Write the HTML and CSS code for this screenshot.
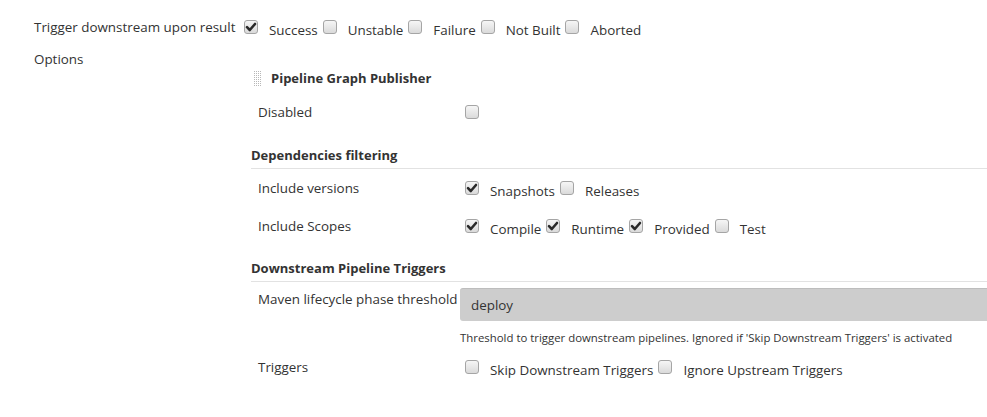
FILE: index.html
```html
<!DOCTYPE html>
<html>
<head>
<meta charset="utf-8">
<link rel="stylesheet" href="styles.css">
</head>
<body>
<div class="form">
  <div class="row top">
    <div class="label">Trigger downstream upon result</div>
    <div class="opts">
      <span class="opt"><span class="cb on"><svg viewBox="0 0 14 14"><path d="M3 7.2 L5.8 10 L11 4"/></svg></span><span class="txt">Success</span></span>
      <span class="opt"><span class="cb"></span><span class="txt">Unstable</span></span>
      <span class="opt"><span class="cb"></span><span class="txt">Failure</span></span>
      <span class="opt"><span class="cb"></span><span class="txt">Not Built</span></span>
      <span class="opt"><span class="cb"></span><span class="txt">Aborted</span></span>
    </div>
  </div>
  <div class="row options">
    <div class="label">Options</div>
    <div class="nested">
      <div class="head"><span class="handle"></span><span class="head-txt">Pipeline Graph Publisher</span></div>
      <div class="irow disabled">
        <div class="ilabel">Disabled</div>
        <div class="ictl"><span class="cb"></span></div>
      </div>
      <div class="section first">Dependencies filtering</div>
      <div class="irow">
        <div class="ilabel">Include versions</div>
        <div class="ictl">
          <span class="opt"><span class="cb on"><svg viewBox="0 0 14 14"><path d="M3 7.2 L5.8 10 L11 4"/></svg></span><span class="txt">Snapshots</span></span>
          <span class="opt"><span class="cb"></span><span class="txt">Releases</span></span>
        </div>
      </div>
      <div class="irow">
        <div class="ilabel">Include Scopes</div>
        <div class="ictl">
          <span class="opt"><span class="cb on"><svg viewBox="0 0 14 14"><path d="M3 7.2 L5.8 10 L11 4"/></svg></span><span class="txt">Compile</span></span>
          <span class="opt"><span class="cb on"><svg viewBox="0 0 14 14"><path d="M3 7.2 L5.8 10 L11 4"/></svg></span><span class="txt">Runtime</span></span>
          <span class="opt"><span class="cb on"><svg viewBox="0 0 14 14"><path d="M3 7.2 L5.8 10 L11 4"/></svg></span><span class="txt">Provided</span></span>
          <span class="opt"><span class="cb"></span><span class="txt">Test</span></span>
        </div>
      </div>
      <div class="section second">Downstream Pipeline Triggers</div>
      <div class="srow">
        <div class="ilabel">Maven lifecycle phase threshold</div>
        <div class="select">deploy</div>
      </div>
      <div class="help">Threshold to trigger downstream pipelines. Ignored if 'Skip Downstream Triggers' is activated</div>
      <div class="irow triggers">
        <div class="ilabel">Triggers</div>
        <div class="ictl">
          <span class="opt"><span class="cb"></span><span class="txt">Skip Downstream Triggers</span></span>
          <span class="opt"><span class="cb"></span><span class="txt">Ignore Upstream Triggers</span></span>
        </div>
      </div>
    </div>
  </div>
</div>
</body>
</html>
```

FILE: styles.css
```css
html, body {
  margin: 0;
  padding: 0;
  background: #fff;
}
body {
  font-family: "Open Sans", "Noto Sans", sans-serif;
  font-size: 13.4px;
  color: #333;
}
.form {
  padding-top: 11px;
  padding-left: 34px;
}
.row {
  display: grid;
  grid-template-columns: 210px 1fr;
}
.row.top {
  height: 32px;
  align-items: center;
}
.row.options {
  grid-template-columns: 217px 1fr;
}
.row.options > .label {
  line-height: 32px;
  align-self: start;
}
.opts, .ictl {
  display: flex;
  align-items: center;
}
.opt {
  display: inline-flex;
  align-items: center;
  margin-right: 5px;
}
.txt {
  margin-left: 11px;
  margin-top: 5px;
}
.row.top .txt {
  margin-top: 6px;
}
.cb {
  width: 14px;
  height: 14px;
  box-sizing: border-box;
  border: 1px solid #a5a5a5;
  border-radius: 3px;
  background: linear-gradient(#f6f6f6, #dadada);
  display: inline-block;
  position: relative;
  flex: none;
}
.cb svg {
  position: absolute;
  left: -1px;
  top: -1px;
  width: 14px;
  height: 14px;
}
.cb svg path {
  fill: none;
  stroke: #2a2a2a;
  stroke-width: 2.6;
  stroke-linecap: round;
  stroke-linejoin: round;
}
.nested {
  padding-top: 23px;
}
.head {
  height: 24px;
  display: flex;
  align-items: center;
  margin-bottom: 5px;
}
.handle {
  width: 9px;
  height: 16px;
  margin-left: 2px;
  margin-right: 9px;
  background-color: #b8b8b8;
  background-image: linear-gradient(90deg, #fff 1px, transparent 1px), linear-gradient(#fff 1px, transparent 1px);
  background-size: 2px 2px;
}
.head-txt, .section {
  font-weight: bold;
  font-size: 13px;
}
.irow {
  display: grid;
  grid-template-columns: 202px 1fr;
  align-items: center;
  height: 38px;
  padding-left: 7px;
}
.irow.disabled {
  height: 34px;
}
.irow .ictl {
  padding-left: 5px;
}
.section {
  line-height: 20px;
  padding-top: 16px;
  padding-bottom: 3px;
  border-bottom: 1px solid #e2e2e2;
}
.section.second {
  padding-top: 13px;
}
.srow {
  display: grid;
  grid-template-columns: 202px 1fr;
  padding-left: 7px;
  margin-top: 6px;
}
.srow .ilabel {
  line-height: 22px;
}
.select {
  height: 33px;
  box-sizing: border-box;
  background: #cdcdcd;
  border-top: 1px solid #bdbdbd;
  border-radius: 3px 0 0 3px;
  padding-left: 11px;
  line-height: 33px;
}
.help {
  font-size: 11.4px;
  line-height: 16px;
  padding-top: 9px;
  padding-left: 209px;
}
.irow.triggers {
  height: 42px;
}
```
